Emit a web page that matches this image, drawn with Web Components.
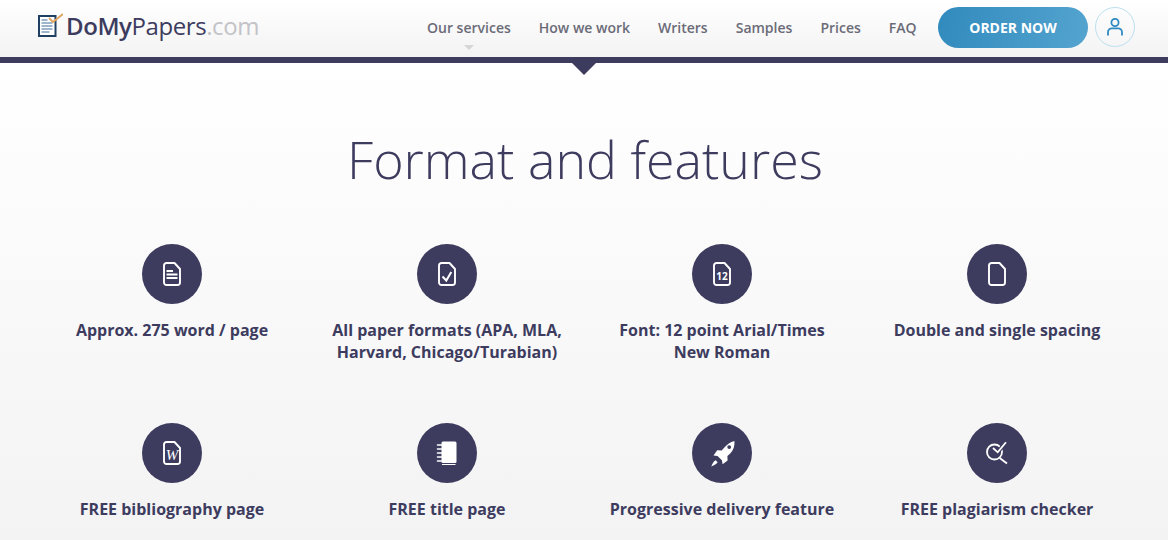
<!DOCTYPE html>
<html lang="en">
<head>
<meta charset="utf-8">
<title>DoMyPapers.com</title>
<style>
  html, body { margin: 0; padding: 0; }
  body {
    height: 540px;
    overflow: hidden;
    font-family: "Open Sans", "Liberation Sans", sans-serif;
    color: #3d3c5f;
    background: linear-gradient(#fff 64px, #f3f3f3 540px);
  }
</style>
</head>
<body>
<site-header>
  <nav-link active>Our services</nav-link>
  <nav-link>How we work</nav-link>
  <nav-link>Writers</nav-link>
  <nav-link>Samples</nav-link>
  <nav-link>Prices</nav-link>
  <nav-link>FAQ</nav-link>
</site-header>
<features-section heading="Format and features">
  <feature-item icon="lines">Approx. 275 word / page</feature-item>
  <feature-item icon="check">All paper formats (APA, MLA, Harvard, Chicago/Turabian)</feature-item>
  <feature-item icon="twelve">Font: 12 point Arial/Times New&nbsp;Roman</feature-item>
  <feature-item icon="blank">Double and single spacing</feature-item>
  <feature-item icon="biblio">FREE bibliography page</feature-item>
  <feature-item icon="notebook">FREE title page</feature-item>
  <feature-item icon="rocket">Progressive delivery feature</feature-item>
  <feature-item icon="search">FREE plagiarism checker</feature-item>
</features-section>

<script>
class NavLink extends HTMLElement {
  constructor() {
    super();
    this.attachShadow({ mode: 'open' });
    this.shadowRoot.innerHTML = `
      <style>
        :host { display: block; position: relative; font-size: 14px; font-weight: 600; line-height: 20px; color: #6b6b78; white-space: nowrap; }
        :host([active])::after {
          content: '';
          position: absolute;
          left: 50%;
          top: 27px;
          margin-left: -5px;
          border: 5px solid transparent;
          border-bottom: 0;
          border-top-color: #d6d6d8;
        }
      </style>
      <slot></slot>
    `;
  }
}

class SiteHeader extends HTMLElement {
  constructor() {
    super();
    this.attachShadow({ mode: 'open' });
    this.shadowRoot.innerHTML = `
      <style>
        :host { display: block; position: relative; box-sizing: border-box; height: 63px; border-bottom: 6px solid #3d3c5f; background: linear-gradient(#fff, #f3f3f3); }
        :host::after {
          content: '';
          position: absolute;
          left: 571px;
          top: 62px;
          border: 13px solid transparent;
          border-bottom: 0;
          border-top-color: #3d3c5f;
        }
        .bar { display: flex; align-items: flex-start; height: 57px; padding: 7px 33px 0 38px; box-sizing: border-box; }
        .logo { display: flex; align-items: center; gap: 3px; height: 41px; font-size: 24px; letter-spacing: -0.42px; color: #3d3c5f; white-space: nowrap; }
        .logo svg { display: block; margin-top: -5px; }
        .logo div { margin-top: -4px; }
        .logo b { font-weight: 600; }
        .logo span { color: #c3c3c8; font-weight: 400; }
        nav { display: flex; gap: 28px; margin-left: auto; height: 41px; align-items: center; }
        .order {
          display: flex; align-items: center; justify-content: center;
          width: 150px; height: 41px; margin-left: 21.5px;
          border-radius: 21px;
          background: linear-gradient(100deg, #318abd, #54a4cf);
          color: #fff; font-size: 14px; font-weight: 700;
        }
        .user {
          display: flex; align-items: center; justify-content: center;
          box-sizing: border-box; width: 40px; height: 40px; margin-left: 7px;
          border: 1px solid #bcdff0; border-radius: 50%;
        }
      </style>
      <div class="bar">
        <div class="logo">
          <svg width="25" height="24" viewBox="0 0 25 24">
            <rect x="1" y="3" width="16.500" height="20" fill="#fff" stroke="#1f3f63" stroke-width="2"/>
            <path d="M3.500 7h6M3.500 10h11M3.500 13h11M3.500 16h11M3.500 19h8" stroke="#3d6f9e" stroke-width="1.200"/>
            <path d="M11 5l4 4L25 1" fill="none" stroke="#e2a45c" stroke-width="1.800"/>
          </svg>
          <div><b>DoMy</b>Papers<span>.com</span></div>
        </div>
        <nav><slot></slot></nav>
        <div class="order">ORDER NOW</div>
        <div class="user">
          <svg width="18" height="20" viewBox="0 0 18 20" fill="none" stroke="#2f8ac0" stroke-width="1.800">
            <circle cx="9" cy="5.500" r="3.600"/>
            <path d="M2 18.500v-3.200c0-2.400 1.800-4 4-4h6c2.200 0 4 1.600 4 4v3.200"/>
          </svg>
        </div>
      </div>
    `;
  }
}

class FeaturesSection extends HTMLElement {
  constructor() {
    super();
    this.attachShadow({ mode: 'open' });
  }

  connectedCallback() {
    this.shadowRoot.innerHTML = `
      <style>
        :host { display: block; padding: 0 35px 0 34px; }
        h1 { margin: 0; padding: 58px 0 0 3px; height: 181px; box-sizing: border-box; text-align: center; font-size: 51.9px; line-height: 76px; font-weight: 300; color: #3d3c5f; }
        .grid { display: grid; grid-template-columns: repeat(4, 275px); grid-template-rows: 179px auto; }
      </style>
      <h1>${this.getAttribute('heading')}</h1>
      <div class="grid"><slot></slot></div>
    `;
  }
}

const FILE = 'M11.500 1H3.500A2.500 2.500 0 0 0 1 3.500v17A2.500 2.500 0 0 0 3.500 23h11a2.500 2.500 0 0 0 2.500-2.500V7z';
const FILE_LINE = `<path d="${FILE}" fill="none" stroke="#fff" stroke-width="1.900" stroke-linejoin="round"/>`;

const ICONS = {
  lines: `${FILE_LINE}<path d="M3.500 9h6.500M3.500 12.500h11M3.500 16h11" stroke="#fff" stroke-width="1.900" fill="none"/>`,
  check: `${FILE_LINE}<path d="M4.500 14.500l3.800 4 5-8.500" stroke="#fff" stroke-width="2" fill="none"/>`,
  twelve: `${FILE_LINE}<text x="9" y="18" text-anchor="middle" font-family="'Open Sans', sans-serif" font-size="10" font-weight="700" fill="#fff">12</text>`,
  blank: FILE_LINE,
  biblio: `${FILE_LINE}<text x="9" y="19" text-anchor="middle" font-family="'Liberation Serif', serif" font-style="italic" font-size="15" fill="#fff">W</text>`,
  notebook: `<rect x="6.500" y="0.500" width="15" height="21.500" rx="1.500" fill="#fff"/><path d="M7 23.500h13.500" stroke="#fff" stroke-width="1" fill="none"/><path d="M2.500 4h4.500M2.500 8h4.500M2.500 12h4.500M2.500 16h4.500M2.500 20h4.500" stroke="#fff" stroke-width="1.600" stroke-linecap="round" fill="none"/>`,
  rocket: `<path fill="#fff" fill-rule="evenodd" d="M25.500 0c.3 5-1 9.300-4.500 12.800l-2.600 2.300.2 4.500-5 3.600-.7-3.900-4.400-4.400-4-.5 3.700-5.200 4.500.2 2.200-2.500C18.500 3.500 20.900.9 25.500 0zM20.200 4.200a1.900 1.900 0 1 0 0 3.800 1.900 1.900 0 0 0 0-3.800z"/><path fill="#fff" d="M6.700 19.300c-1.600.7-3.100 2.800-4.500 6.200 3.200-1.300 5.400-2.600 6.400-4.200l-1.900-2z"/>`,
  search: `<circle cx="9.500" cy="11" r="7.500" fill="none" stroke="#fff" stroke-width="1.800"/><path d="M14.700 17l7.300 5.500" stroke="#fff" stroke-width="1.800" fill="none"/><path d="M12.700 11.300L21 1.300" stroke="#3d3c5f" stroke-width="4" fill="none"/><path d="M8 7l4.700 4.300L21 1.300" stroke="#fff" stroke-width="1.800" fill="none"/>`
};

class FeatureItem extends HTMLElement {
  constructor() {
    super();
    this.attachShadow({ mode: 'open' });
  }

  connectedCallback() {
    const name = this.getAttribute('icon');
    const size = name === 'rocket' ? 26 : (name === 'search' || name === 'notebook') ? 24 : 18;
    this.shadowRoot.innerHTML = `
      <style>
        :host { display: flex; flex-direction: column; align-items: center; }
        .circle { display: flex; align-items: center; justify-content: center; width: 60px; height: 60px; border-radius: 50%; background: #3d3c5f; }
        svg { display: block; overflow: visible; }
        p { margin: 15px 0 0 1px; width: 245px; text-align: center; font-size: 16px; line-height: 22px; font-weight: 700; color: #3d3c5f; }
      </style>
      <div class="circle">
        <svg width="${size}" height="24" viewBox="0 0 ${size} 24">${ICONS[name]}</svg>
      </div>
      <p><slot></slot></p>
    `;
  }
}

customElements.define('nav-link', NavLink);
customElements.define('site-header', SiteHeader);
customElements.define('features-section', FeaturesSection);
customElements.define('feature-item', FeatureItem);
</script>
</body>
</html>
